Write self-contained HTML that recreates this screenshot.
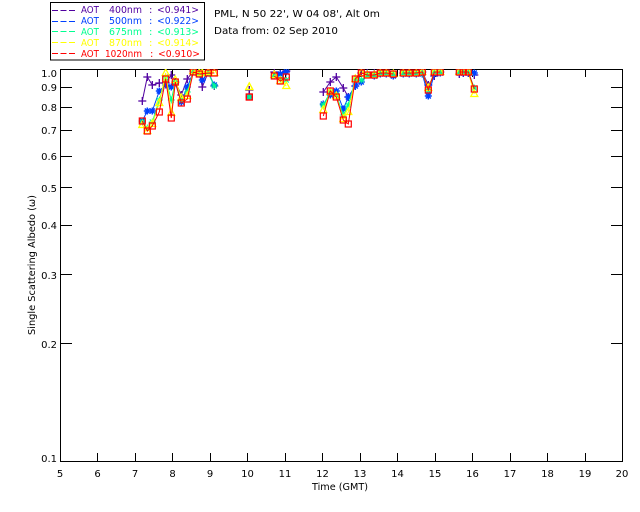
<!DOCTYPE html>
<html><head><meta charset="utf-8"><style>
html,body{margin:0;padding:0;background:#fff;width:640px;height:512px;overflow:hidden}
svg{display:block}
text{font-family:"DejaVu Sans",sans-serif;font-size:10px;fill:#000}
.ax line,.ax path,.ax rect{shape-rendering:crispEdges}
polyline{fill:none;stroke-width:1}
</style></head><body>
<svg width="640" height="512" viewBox="0 0 640 512" xmlns="http://www.w3.org/2000/svg">
<defs>
<marker id="mp" markerUnits="userSpaceOnUse" markerWidth="10" markerHeight="10" refX="5" refY="5" overflow="visible"><path d="M1 5H9M5 1V9" stroke="#5000a0" stroke-width="1.3" fill="none"/></marker>
<marker id="mb" markerUnits="userSpaceOnUse" markerWidth="10" markerHeight="10" refX="5" refY="5" overflow="visible"><path d="M1.5 5H8.5M5 1.5V8.5M2.5 2.5L7.5 7.5M7.5 2.5L2.5 7.5" stroke="#0040ff" stroke-width="1.5" fill="none"/></marker>
<marker id="mg" markerUnits="userSpaceOnUse" markerWidth="10" markerHeight="10" refX="5" refY="5" overflow="visible"><path d="M1.5 5H8.5M5 1.5V8.5M2.5 2.5L7.5 7.5M7.5 2.5L2.5 7.5" stroke="#00ff90" stroke-width="1" fill="none"/></marker>
<marker id="my" markerUnits="userSpaceOnUse" markerWidth="10" markerHeight="10" refX="5" refY="5" overflow="visible"><path d="M5 1L8.5 7.5H1.5Z" stroke="#ffff00" stroke-width="1.3" fill="none"/></marker>
<marker id="mr" markerUnits="userSpaceOnUse" markerWidth="10" markerHeight="10" refX="5" refY="5" overflow="visible"><rect x="2" y="2" width="6" height="6" stroke="#ff0000" stroke-width="1.2" fill="none"/></marker>
<clipPath id="c"><rect x="60" y="69" width="562" height="392"/></clipPath>
</defs>

<g class="ax" stroke="#000" stroke-width="1" fill="none">
<rect x="50.5" y="2.5" width="154" height="57.5"/>
<rect x="60.5" y="69.5" width="562" height="392"/>
<path d="M97.5 69V77M135.5 69V77M172.5 69V77M210.5 69V77M247.5 69V77M285.5 69V77M322.5 69V77M360.5 69V77M397.5 69V77M435.5 69V77M472.5 69V77M510.5 69V77M547.5 69V77M585.5 69V77"/>
<path d="M97.5 461V453M135.5 461V453M172.5 461V453M210.5 461V453M247.5 461V453M285.5 461V453M322.5 461V453M360.5 461V453M397.5 461V453M435.5 461V453M472.5 461V453M510.5 461V453M547.5 461V453M585.5 461V453"/>
<path d="M60 87.5H72M60 107.5H72M60 130.5H72M60 156.5H72M60 187.5H72M60 225.5H72M60 274.5H72M60 343.5H72"/>
<path d="M611 87.5H622M611 107.5H622M611 130.5H622M611 156.5H622M611 187.5H622M611 225.5H622M611 274.5H622M611 343.5H622"/>
</g>

<g>
<path d="M52 10.5H75" stroke="#5000a0" stroke-dasharray="6 2.5" fill="none"/>
<path d="M52 21.5H75" stroke="#0040ff" stroke-dasharray="6 2.5" fill="none"/>
<path d="M52 31.5H75" stroke="#00ff90" stroke-dasharray="6 2.5" fill="none"/>
<path d="M52 42.5H75" stroke="#ffff00" stroke-dasharray="6 2.5" fill="none"/>
<path d="M52 53.5H75" stroke="#ff0000" stroke-dasharray="6 2.5" fill="none"/>
<text x="81" y="13" textLength="18" lengthAdjust="spacingAndGlyphs" style="fill:#5000a0">AOT</text><text x="109" y="13" textLength="33" lengthAdjust="spacingAndGlyphs" style="fill:#5000a0">400nm</text><text x="149" y="13" style="fill:#5000a0">:</text><text x="157" y="13" textLength="42" lengthAdjust="spacingAndGlyphs" style="fill:#5000a0">&lt;0.941&gt;</text>
<text x="81" y="24" textLength="18" lengthAdjust="spacingAndGlyphs" style="fill:#0040ff">AOT</text><text x="109" y="24" textLength="33" lengthAdjust="spacingAndGlyphs" style="fill:#0040ff">500nm</text><text x="149" y="24" style="fill:#0040ff">:</text><text x="157" y="24" textLength="42" lengthAdjust="spacingAndGlyphs" style="fill:#0040ff">&lt;0.922&gt;</text>
<text x="81" y="35" textLength="18" lengthAdjust="spacingAndGlyphs" style="fill:#00ff90">AOT</text><text x="109" y="35" textLength="33" lengthAdjust="spacingAndGlyphs" style="fill:#00ff90">675nm</text><text x="149" y="35" style="fill:#00ff90">:</text><text x="157" y="35" textLength="42" lengthAdjust="spacingAndGlyphs" style="fill:#00ff90">&lt;0.913&gt;</text>
<text x="81" y="46" textLength="18" lengthAdjust="spacingAndGlyphs" style="fill:#ffff00">AOT</text><text x="109" y="46" textLength="33" lengthAdjust="spacingAndGlyphs" style="fill:#ffff00">870nm</text><text x="149" y="46" style="fill:#ffff00">:</text><text x="157" y="46" textLength="42" lengthAdjust="spacingAndGlyphs" style="fill:#ffff00">&lt;0.914&gt;</text>
<text x="81" y="57" textLength="18" lengthAdjust="spacingAndGlyphs" style="fill:#ff0000">AOT</text><text x="105" y="57" textLength="37" lengthAdjust="spacingAndGlyphs" style="fill:#ff0000">1020nm</text><text x="150" y="57" style="fill:#ff0000">:</text><text x="158" y="57" textLength="42" lengthAdjust="spacingAndGlyphs" style="fill:#ff0000">&lt;0.910&gt;</text>
</g>

<text x="214" y="17" textLength="166" lengthAdjust="spacingAndGlyphs">PML, N 50 22', W 04 08', Alt 0m</text>
<text x="214" y="34" textLength="124" lengthAdjust="spacingAndGlyphs">Data from: 02 Sep 2010</text>

<g text-anchor="end">
<text x="57" y="77">1.0</text><text x="57" y="91">0.9</text><text x="57" y="111">0.8</text><text x="57" y="134">0.7</text><text x="57" y="160">0.6</text><text x="57" y="192">0.5</text><text x="57" y="229">0.4</text><text x="57" y="279">0.3</text><text x="57" y="348">0.2</text><text x="57" y="462">0.1</text>
</g>
<g text-anchor="middle">
<text x="60" y="477">5</text><text x="97.5" y="477">6</text><text x="135" y="477">7</text><text x="172.5" y="477">8</text><text x="210" y="477">9</text><text x="247.5" y="477">10</text><text x="285" y="477">11</text><text x="322.5" y="477">12</text><text x="360" y="477">13</text><text x="397.5" y="477">14</text><text x="435" y="477">15</text><text x="472.5" y="477">16</text><text x="510" y="477">17</text><text x="547.5" y="477">18</text><text x="585" y="477">19</text><text x="622" y="477">20</text>
</g>
<text x="312" y="490" textLength="56" lengthAdjust="spacingAndGlyphs">Time (GMT)</text>
<text transform="translate(35 335) rotate(-90)" textLength="140" lengthAdjust="spacingAndGlyphs">Single Scattering Albedo (ω)</text>

<g clip-path="url(#c)">
<g stroke="#5000a0" style="marker-start:url(#mp);marker-mid:url(#mp);marker-end:url(#mp)">
<polyline points="142.3,101 147.3,77 152.3,85 159.3,83 165.7,83 171.3,75 175.3,82 181.3,95 187.3,79 193.3,71 199.3,72 202.3,87 208.3,72 214.3,86"/>
<polyline points="249.3,90 249.3,90"/>
<polyline points="274.3,72 280.3,74 286.3,71"/>
<polyline points="323.3,92 330.3,82 336.3,77 343.3,88 348.3,97 355.3,86 361.3,73 367.3,73 374.3,73 380.3,73 386.3,73 393.3,75"/>
<polyline points="403.3,73 409.3,73 416.3,73 422.3,72 428.3,85 434.3,76 440.3,72"/>
<polyline points="459.3,74 463.3,73 468.3,73 474.3,75"/>
</g>
<g stroke="#0040ff" style="marker-start:url(#mb);marker-mid:url(#mb);marker-end:url(#mb)">
<polyline points="142.3,121 147.3,111 152.3,111 159.3,91 165.7,85 171.3,87 175.3,83 181.3,102 187.3,87 193.3,72 199.3,74 202.3,80 208.3,73 214.3,85"/>
<polyline points="249.3,97 249.3,97"/>
<polyline points="274.3,76 280.3,74 286.3,72"/>
<polyline points="323.3,104 330.3,95 336.3,91 343.3,109 348.3,97 355.3,86 361.3,82 367.3,75 374.3,76 380.3,74 386.3,74 393.3,76"/>
<polyline points="403.3,74 409.3,74 416.3,74 422.3,74 428.3,96 434.3,74 440.3,73"/>
<polyline points="459.3,73 463.3,73 468.3,73 474.3,73"/>
</g>
<g stroke="#00ff90" style="marker-start:url(#mg);marker-mid:url(#mg);marker-end:url(#mg)">
<polyline points="142.3,122 147.3,128 152.3,122 159.3,100 165.7,79 171.3,100 175.3,82 181.3,100 187.3,92 193.3,72 199.3,74 202.3,74 208.3,73 214.3,86"/>
<polyline points="249.3,97 249.3,97"/>
<polyline points="274.3,76 280.3,79 286.3,80"/>
<polyline points="323.3,105 330.3,92 336.3,95 343.3,115 348.3,105 355.3,80 361.3,80 367.3,75 374.3,75 380.3,73 386.3,73 393.3,74"/>
<polyline points="403.3,73 409.3,73 416.3,73 422.3,73 428.3,90 434.3,72 440.3,72"/>
<polyline points="459.3,72 463.3,72 468.3,72 474.3,88"/>
</g>
<g stroke="#ffff00" style="marker-start:url(#my);marker-mid:url(#my);marker-end:url(#my)">
<polyline points="142.3,125 147.3,131 152.3,124 159.3,103 165.7,73 171.3,113 175.3,80 181.3,98 187.3,96 193.3,71 199.3,73 202.3,73 208.3,72 214.3,73"/>
<polyline points="249.3,87 249.3,87"/>
<polyline points="274.3,75 280.3,81 286.3,86"/>
<polyline points="323.3,110 330.3,92 336.3,96 343.3,119 348.3,112 355.3,79 361.3,73 367.3,75 374.3,75 380.3,73 386.3,73 393.3,74"/>
<polyline points="403.3,73 409.3,73 416.3,73 422.3,72 428.3,88 434.3,72 440.3,72"/>
<polyline points="459.3,72 463.3,72 468.3,72 474.3,94"/>
</g>
<g stroke="#ff0000" style="marker-start:url(#mr);marker-mid:url(#mr);marker-end:url(#mr)">
<polyline points="142.3,121 147.3,131 152.3,126 159.3,112 165.7,79 171.3,118 175.3,82 181.3,103 187.3,99 193.3,72 199.3,74 208.3,73 214.3,73"/>
<polyline points="249.3,97 249.3,97"/>
<polyline points="274.3,76 280.3,81 286.3,77"/>
<polyline points="323.3,116 330.3,91 336.3,97 343.3,120 348.3,124 355.3,79 361.3,73 367.3,75 374.3,75 380.3,73 386.3,73 393.3,74"/>
<polyline points="403.3,73 409.3,73 416.3,73 422.3,72 428.3,90 434.3,72 440.3,72"/>
<polyline points="459.3,72 463.3,72 468.3,72 474.3,89"/>
</g>
</g>
</svg>
</body></html>
